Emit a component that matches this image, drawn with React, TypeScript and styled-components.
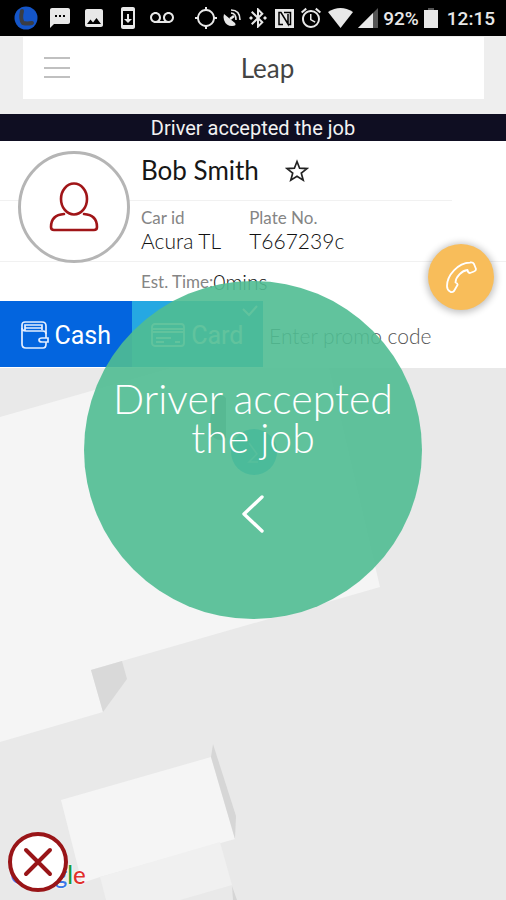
import React from "react";
import styled, { createGlobalStyle } from "styled-components";
import {
  MdSms,
  MdImage,
  MdSystemUpdate,
  MdVoicemail,
  MdLocationSearching,
  MdBluetoothConnected,
  MdAlarm,
} from "react-icons/md";

const lato = `Lato, "Open Sans", sans-serif`;
const roboto = `Roboto, "Liberation Sans", sans-serif`;

const GlobalStyle = createGlobalStyle`
  *, *::before, *::after { box-sizing: border-box; }
  body { margin: 0; background: #eeeeee; font-family: ${lato}; }
  button, input { font: inherit; border: 0; margin: 0; padding: 0; background: none; }
  button { cursor: pointer; }
  p, h1, h2, dl, dt, dd { margin: 0; font-weight: 400; }
  svg { display: block; flex: none; }
`;

const Screen = styled.div`
  position: relative;
  display: flex;
  flex-direction: column;
  min-height: 100vh;
  overflow: hidden;
`;

const StatusBar = styled.div`
  display: flex;
  justify-content: space-between;
  align-items: center;
  height: 36px;
  padding: 0 11px 0 14px;
  background: #000;
  color: #e8e8e8;
  font: 500 19px ${roboto};
`;

const StatusGroup = styled.div<{ $gap: number }>`
  display: flex;
  align-items: center;
  gap: ${(p) => p.$gap}px;
`;

const Clock = styled.time`
  padding-left: 4px;
`;

const Header = styled.header`
  padding: 1px 22px 15px 23px;
  background: #eeeeee;
`;

const TitleBar = styled.div`
  display: grid;
  grid-template-columns: 28px 1fr;
  align-items: center;
  height: 62px;
  padding: 0 20px;
  background: #fff;
`;

const MenuButton = styled.button`
  width: 28px;
  height: 28px;
`;

const Title = styled.h1`
  text-align: center;
  font-size: 26px;
  line-height: 28px;
  color: #444;
`;

const Banner = styled.p`
  padding-top: 2px;
  background: #0f0e22;
  color: #f2f2f2;
  text-align: center;
  font: 400 20px/25px ${roboto};
`;

const DriverPanel = styled.section`
  position: relative;
  background: #fff;
`;

const Avatar = styled.div`
  position: absolute;
  left: 18px;
  top: 10px;
  display: grid;
  place-items: center;
  width: 112px;
  height: 112px;
  border: 3px solid #b5b5b5;
  border-radius: 50%;
  background: #fff;
`;

const NameRow = styled.div`
  display: flex;
  align-items: center;
  gap: 26px;
  height: 60px;
  margin-right: 54px;
  padding-left: 141px;
  border-bottom: 1px solid #f1f1f1;
`;

const Name = styled.h2`
  font-size: 26px;
  line-height: 32px;
  padding-bottom: 2px;
  color: #161616;
`;

const CarRow = styled.dl`
  display: flex;
  gap: 28px;
  height: 61px;
  padding: 7px 0 0 141px;
  border-bottom: 1px solid #f1f1f1;
`;

const Label = styled.dt`
  font-size: 17px;
  line-height: 20px;
  color: #858585;
`;

const Value = styled.dd`
  font-weight: 300;
  font-size: 21px;
  line-height: 26px;
  color: #111;
`;

const TimeRow = styled.dl`
  display: flex;
  align-items: center;
  height: 39px;
  padding-left: 141px;
`;

const CallButton = styled.button`
  position: absolute;
  right: 12px;
  top: 103px;
  display: grid;
  place-items: center;
  width: 66px;
  height: 66px;
  border-radius: 50%;
  background: #f8bd5a;
  box-shadow: 0 1px 7px 2px rgba(0, 0, 0, 0.24);
`;

const PaymentRow = styled.div`
  display: flex;
  height: 67px;
  padding-bottom: 1px;
  background: #fff;
`;

const PayButton = styled.button<{ $tone: string }>`
  position: relative;
  display: flex;
  align-items: center;
  justify-content: center;
  gap: 6px;
  flex: 0 0 26%;
  padding-top: 2px;
  background: ${(p) => p.$tone};
  color: #fff;
  font: 400 25px ${roboto};
`;

const Tick = styled.svg`
  position: absolute;
  right: 4px;
  top: 4px;
`;

const PromoInput = styled.input`
  flex: 1;
  min-width: 0;
  padding: 2px 6px 0;
  font-weight: 300;
  font-size: 21px;
  outline: 0;
  &::placeholder {
    color: #555;
    opacity: 1;
  }
`;

const MapArea = styled.div`
  position: relative;
  flex: 1;
  min-height: 400px;
  background: #e9e9e9;
`;

const MapDrawing = styled.svg`
  position: absolute;
  inset: 0;
  width: 100%;
  height: 100%;
`;

const MapBrand = styled.a`
  position: absolute;
  left: 10px;
  bottom: 11px;
  font: 500 24px/28px ${lato};
  text-decoration: none;
  text-shadow: 0 0 2px #fff, 0 0 2px #fff;
`;

const BrandLetter = styled.span<{ $tone: string }>`
  color: ${(p) => p.$tone};
`;

const CancelButton = styled.button`
  position: absolute;
  left: 8px;
  bottom: 8px;
  display: grid;
  place-items: center;
  width: 60px;
  height: 60px;
  border: 4px solid #991518;
  border-radius: 50%;
  background: #fff;
`;

const Notice = styled.div`
  position: absolute;
  left: 50%;
  top: 50%;
  transform: translate(-50%, -50%);
  display: flex;
  flex-direction: column;
  align-items: center;
  gap: 38px;
  width: 338px;
  height: 338px;
  padding-top: 98px;
  border-radius: 50%;
  background: rgba(80, 188, 146, 0.9);
`;

const NoticeText = styled.p`
  width: 300px;
  text-align: center;
  font-weight: 300;
  font-size: 41px;
  line-height: 39px;
  color: #fff;
`;

const brand: [string, string][] = [
  ["G", "#4285f4"],
  ["o", "#ea4335"],
  ["o", "#fbbc05"],
  ["g", "#3b78e7"],
  ["l", "#1c9a38"],
  ["e", "#e0302b"],
];

const LeapIcon = () => (
  <svg width="24" height="24" viewBox="0 0 24 24">
    <circle cx="12" cy="12" r="11.500" fill="#1455c8" />
    <path d="M8 5Q6 13 9 17Q13 18 18 17" fill="none" stroke="#3a3d44" strokeWidth="4" strokeLinecap="round" />
  </svg>
);

const SatelliteIcon = () => (
  <svg width="18" height="20" viewBox="0 0 18 20">
    <path d="M1 6L12 15Q14 18 9 18Q3 18 1 12Q0 9 1 6Z" fill="#e8e8e8" />
    <path d="M7 11L11 8" stroke="#e8e8e8" strokeWidth="2.500" />
    <path d="M8 5Q13 5 13 12M8 2Q17 2 17 12" fill="none" stroke="#e8e8e8" strokeWidth="1.600" />
  </svg>
);

const NfcIcon = () => (
  <svg width="19" height="19" viewBox="0 0 19 19">
    <path fill="#e8e8e8" d="M0 0h19v19H0z" />
    <path d="M8 15.500H4V3.500H6L13 15V5M9 3.500H15.500V15.500H13" fill="none" stroke="#000" strokeWidth="1.500" />
  </svg>
);

const WifiIcon = () => (
  <svg width="25" height="20" viewBox="0 0 25 20">
    <path d="M0 4Q12.500 -4 25 4L12.500 20Z" fill="#e8e8e8" />
  </svg>
);

const SignalIcon = () => (
  <svg width="20" height="20" viewBox="0 0 20 20">
    <path d="M20 0V20H0Z" fill="#555" />
    <path d="M15 5V20H0Z" fill="#e8e8e8" />
  </svg>
);

const BatteryIcon = () => (
  <svg width="14" height="20" viewBox="0 0 14 20">
    <path d="M4 0h6v2H4z" fill="#555" />
    <path d="M0 2h14v18H0z" fill="#e8e8e8" />
  </svg>
);

const PersonIcon = () => (
  <svg width="50" height="50" viewBox="0 0 50 50" fill="none" stroke="#a01518" strokeWidth="2.600">
    <ellipse cx="25" cy="17" rx="13" ry="15.500" />
    <path d="M15 32Q2 33 2 45Q2 48 5 48H45Q48 48 48 45Q48 33 35 32" strokeLinecap="round" />
  </svg>
);

const StarIcon = () => (
  <svg width="24" height="24" viewBox="0 0 24 24" fill="none" stroke="#222" strokeWidth="1.700">
    <path d="M12 2.500L14.600 9.200L22 9.600L16.300 14.100L18.200 21.200L12 17.200L5.800 21.200L7.700 14.100L2 9.600L9.400 9.200Z" />
  </svg>
);

const PhoneIcon = () => (
  <svg width="34" height="34" viewBox="0 0 34 34" fill="none" stroke="#fff" strokeWidth="1.800" strokeLinejoin="round">
    <path d="M3 26C3 15 14 3 26 2.500Q29 2 30 4L32 9Q32 11 30 11.500L26 13Q24 13 23.500 10C18 10.500 11.500 17 11.500 22.500Q14 23.500 13.500 25L10 31Q8 33 6 31.500Q3 30 3 26Z" />
  </svg>
);

const WalletIcon = () => (
  <svg width="28" height="28" viewBox="0 0 28 28" fill="none" stroke="#e4eeff" strokeWidth="1.700">
    <path d="M25 17V5Q25 1 21 1H4Q1 1 1 4V23Q1 27 5 27H22Q25 27 25 23V21" />
    <path d="M1 7Q1 10 5 10H22Q25 10 25 13M4 10V4H21V9M4 7H21" />
    <path d="M27 17H21Q18 17 18 19T21 21H27Z" />
  </svg>
);

const CardIcon = () => (
  <svg width="34" height="24" viewBox="0 0 34 24" fill="none" stroke="#fff" strokeWidth="1.800">
    <rect x="1" y="1" width="32" height="22" rx="3" />
    <path d="M1 6H33M1 9H33M5 15H20M5 19H13M24 19H29" />
  </svg>
);

export default function App() {
  return (
    <Screen>
      <GlobalStyle />
      <StatusBar>
        <StatusGroup $gap={10}>
          <LeapIcon />
          <MdSms size={24} />
          <MdImage size={24} />
          <MdSystemUpdate size={24} />
          <MdVoicemail size={24} />
        </StatusGroup>
        <StatusGroup $gap={5}>
          <MdLocationSearching size={24} />
          <SatelliteIcon />
          <MdBluetoothConnected size={24} />
          <NfcIcon />
          <MdAlarm size={24} />
          <WifiIcon />
          <SignalIcon />
          <span>92%</span>
          <BatteryIcon />
          <Clock>12:15</Clock>
        </StatusGroup>
      </StatusBar>

      <Header>
        <TitleBar>
          <MenuButton type="button" aria-label="Menu">
            <svg width="28" height="28" viewBox="0 0 28 28">
              <path d="M1 4H27M1 14H27M1 23H27" stroke="#c0c0c0" strokeWidth="2" />
            </svg>
          </MenuButton>
          <Title>Leap</Title>
        </TitleBar>
      </Header>

      <Banner>Driver accepted the job</Banner>

      <DriverPanel>
        <NameRow>
          <Name>Bob Smith</Name>
          <button type="button" aria-label="Favourite driver">
            <StarIcon />
          </button>
        </NameRow>
        <CarRow>
          <div>
            <Label>Car id</Label>
            <Value>Acura TL</Value>
          </div>
          <div>
            <Label>Plate No.</Label>
            <Value>T667239c</Value>
          </div>
        </CarRow>
        <TimeRow>
          <Label>Est. Time:</Label>
          <Value>0mins</Value>
        </TimeRow>
        <Avatar>
          <PersonIcon />
        </Avatar>
        <CallButton type="button" aria-label="Call driver">
          <PhoneIcon />
        </CallButton>
      </DriverPanel>

      <PaymentRow>
        <PayButton type="button" $tone="#0365df">
          <WalletIcon />
          Cash
        </PayButton>
        <PayButton type="button" $tone="#25a8e2">
          <CardIcon />
          Card
          <Tick width="18" height="12" viewBox="0 0 18 12">
            <path d="M2 4L8 10L16 1" fill="none" stroke="#fff" strokeWidth="2" />
          </Tick>
        </PayButton>
        <PromoInput type="text" aria-label="Promo code" placeholder="Enter promo code" />
      </PaymentRow>

      <MapArea>
        <MapDrawing viewBox="0 0 506 532" preserveAspectRatio="xMinYMin slice" aria-hidden="true">
          <path d="M0 49L319 -42L380 219L122 293L91 302L103 344L0 374Z" fill="#f5f5f5" />
          <path d="M91 302L122 293L127 311L103 344Z" fill="#d9d9d9" />
          <path d="M61 432L211 389L235 471L100 509L82 515Z" fill="#f5f5f5" />
          <path d="M211 389L213 376L236 448L235 471Z" fill="#d6d6d6" />
          <path d="M100 509L220 474L232 517L180 532H106Z" fill="#f0f0f0" />
          <path d="M232 518L237 532H233Z" fill="#d6d6d6" />
          <path d="M209 65L212 30Q217 22 226 30V70Q218 76 209 65Z" fill="#9a9a9a" />
          <circle cx="254" cy="84" r="23" fill="#25a8e2" />
          <path d="M249 75L257 86L249 94H258" fill="none" stroke="#8fd0ee" strokeWidth="1.500" />
        </MapDrawing>
        <MapBrand href="#map">
          {brand.map(([letter, tone], i) => (
            <BrandLetter key={i} $tone={tone}>
              {letter}
            </BrandLetter>
          ))}
        </MapBrand>
        <CancelButton type="button" aria-label="Cancel job">
          <svg width="30" height="30" viewBox="0 0 30 30">
            <path d="M3 3L27 27M27 3L3 27" stroke="#991518" strokeWidth="4" strokeLinecap="round" />
          </svg>
        </CancelButton>
      </MapArea>

      <Notice role="status">
        <NoticeText>Driver accepted the job</NoticeText>
        <svg width="24" height="38" viewBox="0 0 24 38">
          <path d="M21 2L3 19L21 36" fill="none" stroke="#fff" strokeWidth="3.400" strokeLinecap="round" strokeLinejoin="round" />
        </svg>
      </Notice>
    </Screen>
  );
}
